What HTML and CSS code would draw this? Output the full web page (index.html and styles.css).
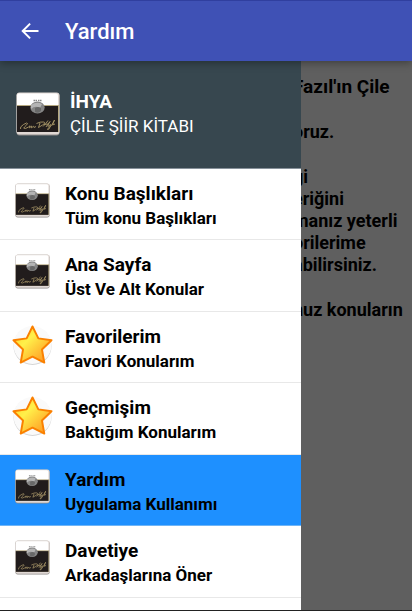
FILE: index.html
```html
<!DOCTYPE html>
<html lang="tr">
<head>
<meta charset="utf-8">
<meta name="viewport" content="width=device-width, initial-scale=1">
<title>Yardım</title>
<link rel="stylesheet" href="styles.css">
</head>
<body>
<svg class="defs" aria-hidden="true">
  <defs>
    <linearGradient id="gold" x1="0" y1="0" x2="1" y2="1">
      <stop offset="0.1" stop-color="#ffd52e"/>
      <stop offset="0.38" stop-color="#fff04a"/>
      <stop offset="0.65" stop-color="#ffc235"/>
      <stop offset="1" stop-color="#ff8a1c"/>
    </linearGradient>
    <symbol id="book" viewBox="0 0 44 44">
      <rect x="0.5" y="1" width="43" height="42.5" rx="3" fill="#8e8a88"/>
      <rect x="0.5" y="0.5" width="43" height="42" rx="3" fill="#e0d8d4"/>
      <rect x="1" y="1.5" width="41" height="13" rx="2" fill="#fff"/>
      <rect x="1" y="13" width="42" height="27" fill="#b5a880"/>
      <rect x="1" y="14" width="41" height="26" fill="#211c1c"/>
      <path d="M17.500 8.500h2M20 8.500h1M22 8.500h1.500M24 8.500h1.500" stroke="#888" stroke-width="1.500"/>
      <ellipse cx="21.500" cy="15.500" rx="7.200" ry="6" fill="#858585"/>
      <path d="M15 13q6-4 11-1l-2 4q-5-3-9 1z" fill="#b4b4b4"/>
      <path d="M19 16q3-2 6 0v3q-3 3-6 1z" fill="#686868"/>
      <path d="M4.500 37q-1-2 3-4.500t4-1q-1 2-3 3.500t1 1.500l3-1.500 1.500-1.200-.5 2 2-1.700v1.700l2-1.500.5 1.200 2-1" fill="none" stroke="#a89668" stroke-width="0.900"/>
      <path d="M20.500 31.500q4-2 7-1.500t-1 3l-4 2.500 1.500-4.500M27 34.500q4-4 5-6M28 32.500l4-.5M30 35q2-3 4-5.500q-3 5-2 5l2.500-2-.5 2.500q-1 3-2.500 2.500q0-1.500 4-4l3-5.500-2 5 2.500-1" fill="none" stroke="#a89668" stroke-width="0.900"/>
    </symbol>
    <symbol id="star" viewBox="0 0 42 42">
      <circle cx="21" cy="21.500" r="19.500" fill="#d5d5d5"/>
      <circle cx="21" cy="20.500" r="19.500" fill="#fafafa"/>
      <path d="M21 1.500l6 12.200 13.500 1.900-9.800 9.500 2.400 13.400-12.100-6-12.100 6 2.400-13.400-9.800-9.500 13.500-1.900z" fill="url(#gold)" stroke="#fa8000" stroke-width="2" stroke-linejoin="round"/>
    </symbol>
  </defs>
</svg>

<header class="toolbar">
  <button class="back" type="button" aria-label="Geri">
    <svg viewBox="0 0 24 24"><path d="M20.500 11H7.100l5.700-5.700L11.400 3.900 3.300 12l8.100 8.100 1.400-1.400L7.100 13H20.500z" fill="currentColor"/></svg>
  </button>
  <h1>Yardım</h1>
</header>

<div class="stage">
  <main class="help">
    <h2>Fazıl'ın Çile</h2>
    <p>oruz.</p>
    <p>ği<br>eriğini<br>manız yeterli<br>orilerime<br>abilirsiniz.</p>
    <p>nuz konuların</p>
  </main>

  <nav class="drawer">
    <div class="profile">
      <svg class="cover"><use href="#book"/></svg>
      <div>
        <strong>İHYA</strong>
        <span>ÇİLE ŞİİR KİTABI</span>
      </div>
    </div>
    <ul class="menu">
      <li><a href="#konular"><svg class="thumb"><use href="#book"/></svg><span><b>Konu Başlıkları</b><small>Tüm konu Başlıkları</small></span></a></li>
      <li><a href="#ana"><svg class="thumb"><use href="#book"/></svg><span><b>Ana Sayfa</b><small>Üst Ve Alt Konular</small></span></a></li>
      <li><a href="#favoriler"><svg class="thumb star"><use href="#star"/></svg><span><b>Favorilerim</b><small>Favori Konularım</small></span></a></li>
      <li><a href="#gecmis"><svg class="thumb star"><use href="#star"/></svg><span><b>Geçmişim</b><small>Baktığım Konularım</small></span></a></li>
      <li class="active"><a href="#yardim" aria-current="page"><svg class="thumb"><use href="#book"/></svg><span><b>Yardım</b><small>Uygulama Kullanımı</small></span></a></li>
      <li><a href="#davetiye"><svg class="thumb"><use href="#book"/></svg><span><b>Davetiye</b><small>Arkadaşlarına Öner</small></span></a></li>
    </ul>
  </nav>
</div>
</body>
</html>
```
FILE: styles.css
```css
* { box-sizing: border-box; }

body {
  margin: 0;
  min-height: 100vh;
  display: flex;
  flex-direction: column;
  font-family: Roboto, "Noto Sans", sans-serif;
  color: #000;
  background: #5f5f5f;
}

.defs { position: absolute; width: 0; height: 0; }

.toolbar {
  position: relative;
  z-index: 2;
  display: flex;
  align-items: center;
  gap: 19px;
  height: 61px;
  padding: 2px 14px 0;
  border-top: 1px solid #303f9f;
  background: #3f51b5;
  color: #fff;
  box-shadow: 0 2px 8px rgba(0, 0, 0, 0.35);
}

.back {
  width: 32px;
  height: 32px;
  padding: 3px 4px 5px;
  border: 0;
  background: none;
  color: inherit;
}

.back svg { display: block; width: 24px; height: 24px; }

h1 { margin: 0; font-size: 22px; font-weight: 500; line-height: 28px; }

.stage {
  position: relative;
  flex: 1;
  overflow: hidden;
  border-bottom: 1px solid #222;
}

.help {
  padding: 14px 0 0 293px;
  font-size: 18px;
  font-weight: 700;
  line-height: 22px;
  white-space: nowrap;
}

.help h2 { margin: 0 0 22px; font-size: 19px; line-height: 24px; }
.help p { margin: 0 0 23px; }

.drawer {
  position: absolute;
  top: 0;
  bottom: 0;
  left: 0;
  width: 301px;
  background: #fff;
}

.profile {
  display: flex;
  align-items: center;
  gap: 10px;
  height: 108px;
  padding: 0 16px 2px;
  border-bottom: 1px solid #87919a;
  background: #37474f;
  color: #fff;
}

.cover { width: 44px; height: 44px; }
.profile strong, .profile span { display: block; line-height: 24px; }
.profile strong { font-size: 19px; }
.profile span { font-size: 17px; }

.menu { margin: 0; padding: 0; list-style: none; }
.menu li { height: 71px; border-bottom: 1px solid #e8e8e8; }
.menu li:nth-child(even) { height: 72px; }
.menu .active { background: #1e90ff; border-color: #6fb5f7; }

.menu a {
  display: flex;
  gap: 15px;
  height: 100%;
  padding: 13px 0 0 15px;
  color: inherit;
  text-decoration: none;
}

.thumb { width: 35px; height: 37px; }
.thumb.star { width: 41px; height: 41px; margin: 0 -3px; }
.menu b, .menu small { display: block; line-height: 24px; font-weight: 700; }
.menu b { font-size: 19px; }
.menu small { font-size: 17px; }
```
